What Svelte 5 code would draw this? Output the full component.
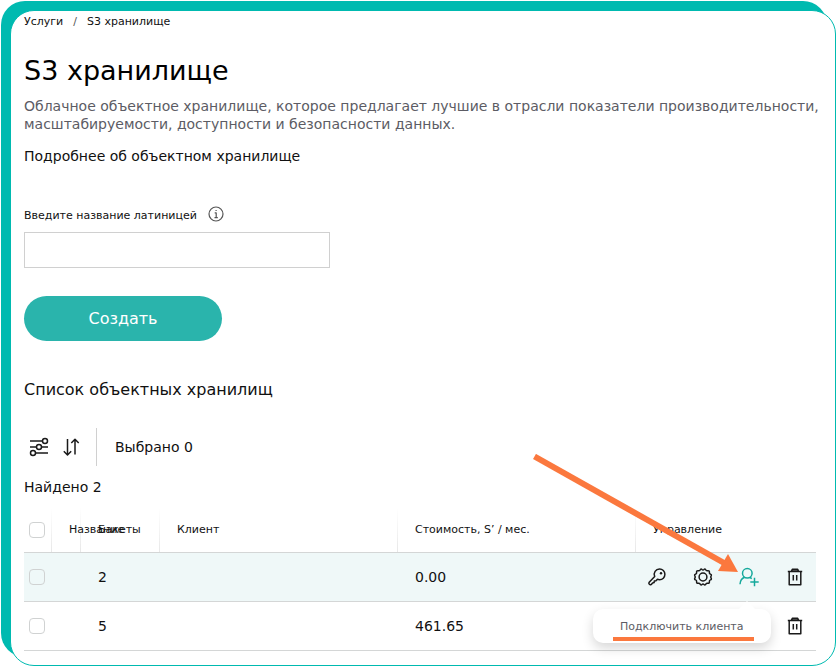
<script>
  const rows = [
    { id: 'first', buckets: '2', cost: '0.00', active: true },
    { id: 'second', buckets: '5', cost: '461.65', active: false }
  ];
</script>

{#snippet keyIcon()}
  <svg viewBox="0 0 20 20" width="20" height="20" aria-hidden="true">
    <path d="M12.600 2a5.300 5.300 0 0 1 5.300 5.300c0 3.100-2.400 5.400-5.300 5.400-.8 0-1.500-.1-2.200-.4L9 13.700l-1.700.3-.2 1.600-1.500.3-1.300 1.500c-1.400 1.100-3.200-.6-2.100-2.100l5.500-5.800A5.300 5.300 0 0 1 12.600 2z" />
    <circle class="dot" cx="14" cy="6.200" r="1.200" />
  </svg>
{/snippet}

{#snippet gearIcon()}
  <svg viewBox="0 0 20 20" width="20" height="20" aria-hidden="true">
    <path d="M7.500 2.300Q8.300 1.700 9 2.500Q10 3.500 11 2.500Q11.700 1.700 12.500 2.300L13 3.100Q13.600 4 14.900 3.700Q16.600 3.600 16.400 5.500Q16.200 6.700 17.400 7.100Q18.900 7.700 18.100 9Q17.300 10 18.100 11Q18.900 12.300 17.400 12.900Q16.200 13.300 16.400 14.500Q16.600 16.400 14.900 16.300Q13.600 16 13 16.900L12.500 17.700Q11.700 18.300 11 17.500Q10 16.500 9 17.500Q8.300 18.300 7.500 17.700L7 16.900Q6.400 16 5.100 16.300Q3.400 16.400 3.600 14.500Q3.800 13.300 2.600 12.900Q1.100 12.300 1.900 11Q2.700 10 1.900 9Q1.100 7.700 2.600 7.100Q3.800 6.700 3.600 5.500Q3.400 3.600 5.100 3.700Q6.400 4 7 3.100z" />
    <circle cx="10" cy="10" r="3.900" />
  </svg>
{/snippet}

{#snippet clientIcon()}
  <svg viewBox="0 0 20 20" width="20" height="20" aria-hidden="true">
    <circle cx="8.300" cy="6.300" r="4.800" />
    <path d="M1 17.300c.2-3.300 1.800-6 4.700-7M10.900 10.300l1.800 1.400M15.500 10.800v8.400M11.300 15h8.400" />
  </svg>
{/snippet}

{#snippet trashIcon()}
  <svg viewBox="0 0 20 20" width="20" height="20" aria-hidden="true">
    <path class="lid" d="M6.500 4.200l.8-2h5.400l.8 2z" />
    <path d="M2.800 4.500h14.400M4.200 4.500v13.300h11.600V4.500M8.300 8v5.500M11.700 8v5.500" />
  </svg>
{/snippet}

<main class="card">
  <nav class="crumbs" aria-label="Навигация">
    <a href="#services">Услуги</a>
    <span class="slash">/</span>
    <a href="#s3" aria-current="page">S3 хранилище</a>
  </nav>

  <h1>S3 хранилище</h1>
  <p class="lead">
    Облачное объектное хранилище, которое предлагает лучшие в отрасли показатели производительности,
    масштабируемости, доступности и безопасности данных.
  </p>
  <a class="more" href="#about">Подробнее об объектном хранилище</a>

  <form class="create" onsubmit={(e) => e.preventDefault()}>
    <div class="label-row">
      <label for="name">Введите название латиницей</label>
      <svg class="info" viewBox="0 0 16 16" width="16" height="16" aria-hidden="true">
        <circle cx="8" cy="8" r="7" />
        <path d="M6.700 6.900h1.500v4.600M6.500 11.600h3.300M7.500 4.500h1.200" />
      </svg>
    </div>
    <input id="name" class="name" type="text" />
    <button class="submit" type="submit">Создать</button>
  </form>

  <h2>Список объектных хранилищ</h2>

  <div class="toolbar">
    <button class="icon" type="button" aria-label="Фильтр">
      <svg viewBox="0 0 20 20" width="20" height="20" aria-hidden="true">
        <path d="M1 4h12.500M1 10h6.500M12.500 10H19M6.500 16H19" />
        <circle cx="16" cy="4" r="2.500" />
        <circle cx="10" cy="10" r="2.500" />
        <circle cx="4" cy="16" r="2.500" />
      </svg>
    </button>
    <button class="icon" type="button" aria-label="Сортировка">
      <svg viewBox="0 0 20 20" width="20" height="20" aria-hidden="true">
        <path d="M6.500 2v15.500M2.800 14.300l3.700 3.700 3.700-3.700M14 17.500V2.500M10.300 6l3.700-3.700L17.700 6" />
      </svg>
    </button>
    <span class="selected">Выбрано 0</span>
  </div>

  <p class="found">Найдено 2</p>

  <table>
    <colgroup>
      <col class="c-check" />
      <col class="c-name" />
      <col class="c-buckets" />
      <col />
      <col />
      <col class="c-actions" />
    </colgroup>
    <thead>
      <tr>
        <th class="check"><input type="checkbox" aria-label="Выбрать все" /></th>
        <th>Название</th>
        <th>Бакеты</th>
        <th>Клиент</th>
        <th>Стоимость, S’ / мес.</th>
        <th>Управление</th>
      </tr>
    </thead>
    <tbody>
      {#each rows as row (row.id)}
        <tr class:active={row.active}>
          <td class="check"><input type="checkbox" aria-label="Выбрать хранилище" /></td>
          <td></td>
          <td>{row.buckets}</td>
          <td></td>
          <td>{row.cost}</td>
          <td class="manage">
            <div class="actions">
              <button class="icon" type="button" aria-label="Ключ">{@render keyIcon()}</button>
              <button class="icon" type="button" aria-label="Настройки">{@render gearIcon()}</button>
              <div class="client">
                <button class="icon" class:accent={row.active} type="button" aria-label="Подключить клиента">
                  {@render clientIcon()}
                </button>
                {#if row.active}
                  <div class="tip" role="tooltip"><span>Подключить клиента</span></div>
                  <svg class="pointer" viewBox="0 0 206 118" width="206" height="118" aria-hidden="true">
                    <path d="M1.500 2.500L192 109.500" />
                    <polygon points="205,118 195,100 185,117" />
                  </svg>
                {/if}
              </div>
              <button class="icon" type="button" aria-label="Удалить">{@render trashIcon()}</button>
            </div>
          </td>
        </tr>
      {/each}
    </tbody>
  </table>
</main>

<style>
  :global(body) {
    margin: 0;
    background: #fff;
  }

  .card {
    box-sizing: border-box;
    min-height: calc(100vh - 10px);
    margin: 10px 0 0 10px;
    padding: 2px 19px 13px 13px;
    border: 1px solid #00bab0;
    border-radius: 24px;
    background: #fff;
    box-shadow: -9px -9px 0 #00bab0;
    color: #111;
    font: 14px/18px Verdana, "DejaVu Sans", sans-serif;
  }

  a {
    color: inherit;
    text-decoration: none;
  }

  .crumbs {
    display: flex;
    gap: 10px;
    font-size: 11px;
    line-height: 18px;
  }

  .slash {
    color: #555;
  }

  h1 {
    margin: 22px 0 9px;
    font-size: 27px;
    font-weight: 400;
    line-height: 35px;
    color: #000;
  }

  .lead {
    margin: 0 -12px 14px 0;
    color: #5c5c64;
  }

  .more {
    display: block;
  }

  .create {
    display: flex;
    flex-direction: column;
    align-items: flex-start;
    margin: 41px 0 39px;
  }

  .label-row {
    display: flex;
    align-items: flex-start;
    gap: 11px;
    margin-bottom: 6px;
    font-size: 11px;
    line-height: 20px;
  }

  svg {
    display: block;
    fill: none;
    stroke: currentColor;
    stroke-width: 1.5;
    stroke-linejoin: round;
  }

  .info {
    color: #555;
    stroke-width: 1.2;
  }

  .name {
    box-sizing: border-box;
    width: 306px;
    max-width: 100%;
    height: 36px;
    padding: 0 12px;
    border: 1px solid #d0d0d0;
    background: #fff;
    font: inherit;
  }

  .submit {
    margin-top: 28px;
    width: 198px;
    height: 45px;
    border: 0;
    border-radius: 23px;
    background: #2ab4ac;
    color: #fff;
    font: inherit;
    font-size: 16px;
  }

  h2 {
    margin: 0 0 28px;
    font-size: 16px;
    font-weight: 400;
    line-height: 20px;
  }

  .toolbar {
    display: flex;
    align-items: center;
    gap: 8px;
    padding-left: 3px;
  }

  .icon {
    display: grid;
    place-items: center;
    width: 24px;
    height: 24px;
    padding: 0;
    border: 0;
    background: none;
    color: #1a1a1a;
  }

  .selected {
    margin-left: 5px;
    padding: 10px 18px;
    border-left: 1px solid #d0d0d0;
  }

  .found {
    margin: 12px 0;
  }

  table {
    width: 100%;
    border-collapse: collapse;
    table-layout: fixed;
  }

  .c-check {
    width: 27px;
  }

  .c-name {
    width: 29px;
  }

  .c-buckets {
    width: 79px;
  }

  .c-actions {
    width: 181px;
  }

  th,
  td {
    height: 48px;
    padding: 0 0 0 18px;
    border-bottom: 1px solid #d4d6d6;
    text-align: left;
    font-weight: 400;
    white-space: nowrap;
  }

  th {
    height: 44px;
    font-size: 11px;
    background: linear-gradient(#fff, #e8e8e8) left / 1px 100% no-repeat;
  }

  th:first-child {
    background: none;
  }

  .active {
    background: #eff8f8;
  }

  .check {
    padding-left: 5px;
  }

  .check input {
    display: block;
    box-sizing: border-box;
    width: 16px;
    height: 16px;
    margin: 0;
    appearance: none;
    border: 1px solid #d0d2d2;
    border-radius: 4px;
  }

  .manage {
    padding: 0 9px 0 0;
  }

  .actions {
    display: flex;
    justify-content: flex-end;
    gap: 22px;
  }

  .lid {
    fill: #999;
  }

  .dot {
    fill: currentColor;
    stroke: none;
  }

  .accent {
    color: #16a99c;
  }

  .client {
    position: relative;
  }

  .tip {
    position: absolute;
    z-index: 1;
    top: 44px;
    right: -10px;
    box-sizing: border-box;
    width: 178px;
    height: 34px;
    padding: 8px 17px 2px 20px;
    border-radius: 10px;
    background: #fff;
    box-shadow: 0 5px 12px rgb(0 0 0 / 16%);
    color: #5c5c64;
    font-size: 11px;
    line-height: 20px;
  }

  .tip::before {
    content: "";
    position: absolute;
    top: -8px;
    right: 16px;
    border: 8px solid transparent;
    border-top: 0;
    border-bottom-color: #fff;
  }

  .tip span {
    display: block;
    padding-left: 7px;
    border-bottom: 4px solid #fb783e;
  }

  .pointer {
    position: absolute;
    z-index: 2;
    right: 22px;
    bottom: 17px;
    color: #fb783e;
    stroke-width: 6;
    pointer-events: none;
  }

  .pointer polygon {
    fill: currentColor;
    stroke: none;
  }
</style>
